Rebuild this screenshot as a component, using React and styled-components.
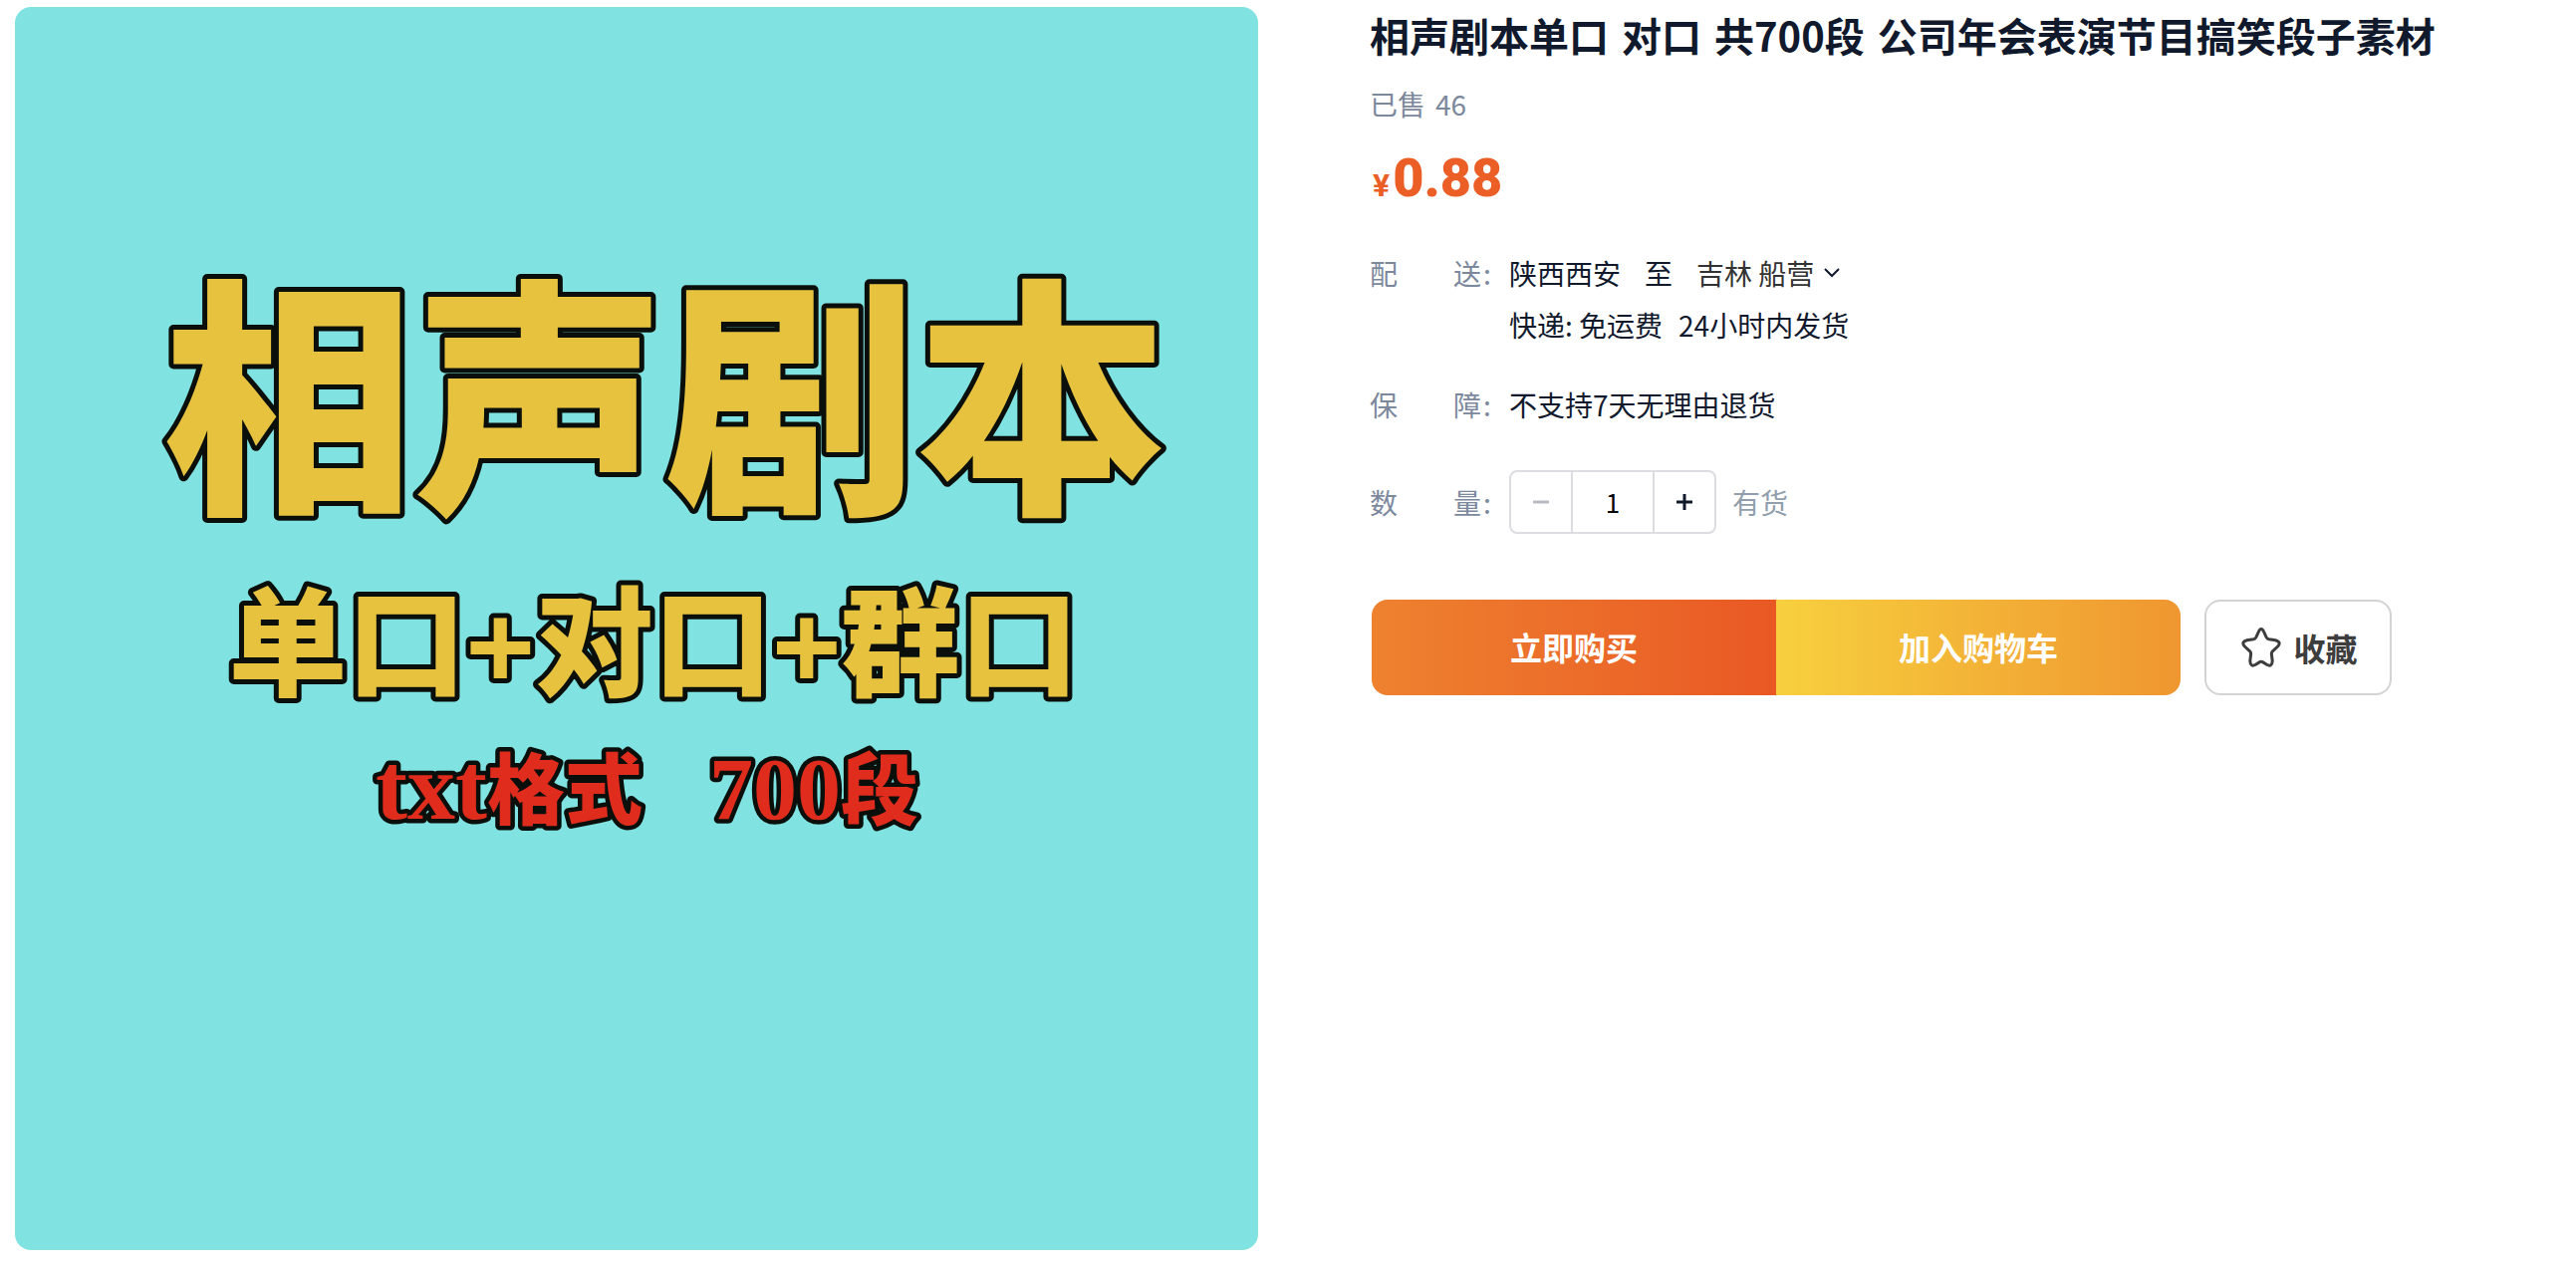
import React, { useState } from 'react';
import styled, { createGlobalStyle } from 'styled-components';

const titleWords = ['相声剧本单口', '对口', '共700段', '公司年会表演节目搞笑段子素材'];

export default function App() {
    const [count, setCount] = useState(1);

    return (
        <>
            <GlobalStyle />
            <PageWrapper>
                <Poster />
                <Detail>
                    <Title>
                        {titleWords.map((word) => <span key={word}>{word}</span>)}
                    </Title>
                    <Sold><span>已售</span><span>46</span></Sold>
                    <Price>
                        <small>¥</small>
                        <strong>0.88</strong>
                    </Price>
                    <InfoList>
                        <InfoRow>
                            <Label htmlFor="area"><Spread>配 送</Spread>:</Label>
                            <div>
                                <Line $gap={24}>
                                    <span>陕西西安</span>
                                    <span>至</span>
                                    <AreaPicker>
                                        <select id="area" defaultValue="chuanying">
                                            <option value="chuanying">吉林 船营</option>
                                        </select>
                                        <svg width="16" height="10" viewBox="0 0 16 10">
                                            <path d="M1 1l7 7 7-7" />
                                        </svg>
                                    </AreaPicker>
                                </Line>
                                <Line $gap={16}>
                                    <span>快递: 免运费</span>
                                    <span>24小时内发货</span>
                                </Line>
                            </div>
                        </InfoRow>
                        <InfoRow>
                            <Label as="span"><Spread>保 障</Spread>:</Label>
                            <Line>不支持7天无理由退货</Line>
                        </InfoRow>
                    </InfoList>
                    <CountRow>
                        <Label htmlFor="count"><Spread>数 量</Spread>:</Label>
                        <Stepper>
                            <button
                                type="button"
                                aria-label="减少"
                                disabled={count <= 1}
                                onClick={() => setCount(count - 1)}
                            >
                                <svg width="16" height="16" viewBox="0 0 16 16"><path d="M0 8h16" /></svg>
                            </button>
                            <input
                                id="count"
                                value={count}
                                onChange={(e) => setCount(Number(e.target.value) || 1)}
                            />
                            <button type="button" aria-label="增加" onClick={() => setCount(count + 1)}>
                                <svg width="16" height="16" viewBox="0 0 16 16"><path d="M0 8h16M8 0v16" /></svg>
                            </button>
                        </Stepper>
                        <Stock>有货</Stock>
                    </CountRow>
                    <Actions>
                        <BuyGroup>
                            <BuyButton type="button" $from="#ee822f" $to="#e95824">立即购买</BuyButton>
                            <BuyButton type="button" $from="#f7d03e" $to="#ef9630">加入购物车</BuyButton>
                        </BuyGroup>
                        <FavButton type="button">
                            <svg width="40" height="40" viewBox="0 0 40 40">
                                <path d="M17.2 4.6Q20 -1.4 22.8 4.6L25.2 9.8Q26 11.4 27.8 11.8L34.2 12.8Q40.6 14.4 36.6 19L31.4 23.8Q30.2 25 30.4 26.8L31.2 33.6Q30.8 40.2 25.6 37.2L21.4 34.6Q20 33.8 18.6 34.6L14.4 37.2Q9.2 40.2 8.8 33.6L9.6 26.8Q9.8 25 8.6 23.8L3.4 19Q-.6 14.4 5.8 12.8L12.2 11.8Q14 11.4 14.8 9.8Z" />
                            </svg>
                            收藏
                        </FavButton>
                    </Actions>
                </Detail>
            </PageWrapper>
        </>
    );
}

// product cover, scales with its column
function Poster() {
    return (
        <PosterArt viewBox="0 0 1248 1248" role="img" aria-label="相声剧本">
            <BigText x="653" y="489" $size={252}>相声剧本</BigText>
            <BigText x="641" y="683" $size={119}>单口+对口+群口</BigText>
            <RedText x="362" y="815">
                <tspan className="wide">txt</tspan><tspan className="cjk">格式</tspan>
            </RedText>
            <RedText x="697" y="815">
                <tspan>700</tspan><tspan className="cjk">段</tspan>
            </RedText>
        </PosterArt>
    );
}

const GlobalStyle = createGlobalStyle`
    * {
        box-sizing: border-box;
    }

    body {
        margin: 0;
        background: #fff;
        color: #11192d;
        font-family: "Noto Sans CJK SC", sans-serif;
        font-size: 28px;
    }

    button, input, select {
        margin: 0;
        padding: 0;
        border: 0;
        background: none;
        color: inherit;
        font: inherit;
    }

    button {
        cursor: pointer;
    }
`;

const PageWrapper = styled.main`
    display: flex;
    align-items: flex-start;
    gap: 112px;
    padding: 7px 15px 11px;
`;

const PosterArt = styled.svg`
    flex: none;
    width: calc(50% - 30px);
    border-radius: 16px;
    background: #80e3e1;

    text {
        stroke: #0b0f0c;
        stroke-linejoin: round;
        paint-order: stroke;
    }
`;

const BigText = styled.text`
    fill: #e6c23f;
    stroke-width: 10px;
    font-family: "Liberation Sans", "Noto Sans CJK SC", sans-serif;
    font-size: ${(props) => props.$size}px;
    font-weight: 900;
    text-anchor: middle;
`;

const RedText = styled.text`
    fill: #df2c1c;
    stroke-width: 9px;
    font-family: "Liberation Serif", serif;
    font-size: 88px;
    font-weight: 700;

    .wide {
        font-size: 96px;
    }

    .cjk {
        font-family: "Noto Sans CJK SC", sans-serif;
        font-size: 78px;
        font-weight: 900;
    }
`;

const Detail = styled.section`
    flex: 1;
    min-width: 0;
`;

const Title = styled.h1`
    display: flex;
    flex-wrap: wrap;
    column-gap: 13px;
    margin: 0;
    font-size: 40px;
    font-weight: 700;
    line-height: 56px;
`;

const Sold = styled.p`
    display: flex;
    gap: 10px;
    margin: 21px 0 0;
    color: #7c889c;
    line-height: 40px;
`;

const Price = styled.p`
    display: flex;
    align-items: baseline;
    gap: 3px;
    margin: 23px 0 0;
    padding-left: 3px;
    color: #eb5f27;
    font-family: Roboto, sans-serif;
    font-weight: 700;
    line-height: 64px;

    small {
        font-size: 32px;
    }

    strong {
        font-size: 54px;
    }
`;

const InfoList = styled.div`
    display: flex;
    flex-direction: column;
    gap: 28px;
    margin-top: 30px;
`;

const InfoRow = styled.div`
    display: flex;
    align-items: flex-start;
    line-height: 52px;
`;

const CountRow = styled(InfoRow)`
    align-items: center;
    margin-top: 40px;
`;

const Label = styled.label`
    display: flex;
    flex: none;
    gap: 2px;
    width: 140px;
    color: #7c889c;
`;

const Spread = styled.span`
    width: 112px;
    text-align: justify;
    text-align-last: justify;
`;

const Line = styled.div`
    display: flex;
    gap: ${(props) => props.$gap || 0}px;
`;

const AreaPicker = styled.span`
    display: flex;
    align-items: center;
    gap: 9px;
    color: #333;

    select {
        appearance: none;
        height: 52px;
    }

    path {
        fill: none;
        stroke: #11192d;
        stroke-width: 2px;
    }
`;

const Stepper = styled.div`
    display: flex;
    height: 64px;
    border: 2px solid #dcdce1;
    border-radius: 8px;

    button {
        display: flex;
        align-items: center;
        justify-content: center;
        width: 60px;
    }

    input {
        width: 84px;
        border: solid #dcdce1;
        border-width: 0 2px;
        color: #000;
        font-size: 26px;
        text-align: center;
    }

    path {
        stroke: #11192d;
        stroke-width: 3px;
    }

    button:disabled path {
        stroke: #b8bac2;
    }
`;

const Stock = styled.span`
    margin-left: 16px;
    color: #919eab;
`;

const Actions = styled.div`
    display: flex;
    gap: 24px;
    margin-top: 66px;
    padding-left: 2px;
    font-size: 32px;
    font-weight: 700;
`;

const BuyGroup = styled.div`
    display: flex;
    overflow: hidden;
    border-radius: 16px;
`;

const BuyButton = styled.button`
    width: 406px;
    height: 96px;
    padding-bottom: 2px;
    background: linear-gradient(90deg, ${(props) => props.$from}, ${(props) => props.$to});
    color: #fff;
`;

const FavButton = styled.button`
    display: flex;
    align-items: center;
    justify-content: center;
    gap: 12px;
    width: 188px;
    height: 96px;
    padding-left: 3px;
    border: 2px solid #d3d3d3;
    border-radius: 16px;
    color: #3d3d3d;

    path {
        fill: none;
        stroke: #3d3d3d;
        stroke-width: 3px;
        stroke-linejoin: round;
    }
`;
